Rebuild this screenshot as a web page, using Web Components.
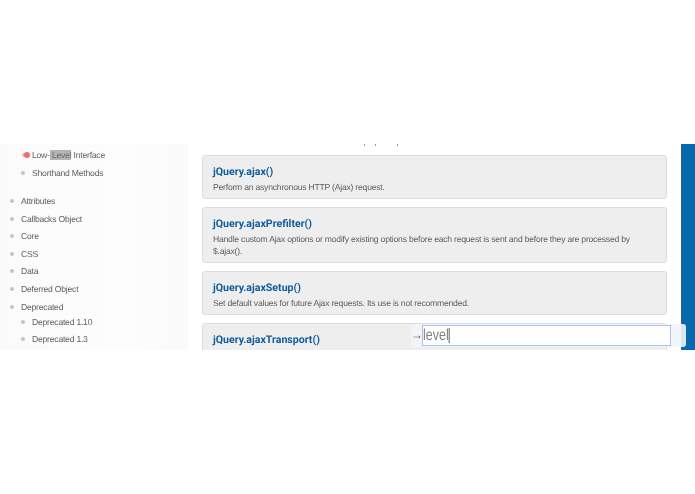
<!DOCTYPE html>
<html>
<head>
<meta charset="utf-8">
<title>jQuery API</title>
<style>
  html, body { margin: 0; background: #fff; }
  body { font-family: "Liberation Sans", Arial, sans-serif; text-rendering: geometricPrecision; }
</style>
</head>
<body>
<api-page>
  <side-nav slot="side">
    <nav-item level="2" active><span>Low-<mark-hit>Level</mark-hit> Interface</span></nav-item>
    <nav-item level="2" last>Shorthand Methods</nav-item>
    <nav-item>Attributes</nav-item>
    <nav-item>Callbacks Object</nav-item>
    <nav-item>Core</nav-item>
    <nav-item>CSS</nav-item>
    <nav-item>Data</nav-item>
    <nav-item>Deferred Object</nav-item>
    <nav-item tight>Deprecated</nav-item>
    <nav-item level="2">Deprecated 1.10</nav-item>
    <nav-item level="2">Deprecated 1.3</nav-item>
  </side-nav>
  <api-card title="jQuery.ajax()">Perform an asynchronous HTTP (Ajax) request.</api-card>
  <api-card title="jQuery.ajaxPrefilter()">Handle custom Ajax options or modify existing options before each request is sent and before they are processed by $.ajax().</api-card>
  <api-card title="jQuery.ajaxSetup()">Set default values for future Ajax requests. Its use is not recommended.</api-card>
  <api-card title="jQuery.ajaxTransport()">Bind a function to handle custom transport.</api-card>
  <find-bar slot="over" value="level"></find-bar>
</api-page>
<script>
class ApiPage extends HTMLElement {
  constructor() {
    super();
    this.attachShadow({ mode: "open" });
    this.shadowRoot.innerHTML = `
      <style>
        :host { display: block; width: 695px; height: 494px; padding-top: 144px; box-sizing: border-box; }
        .view { position: relative; display: flex; height: 206px; overflow: hidden; background: #fff; filter: blur(.3px); }
        .side { width: 188px; flex: none; background: linear-gradient(90deg, #fbfbfb, #fdfdfd 70%, #fafafa); }
        .main { width: 465px; flex: none; margin-left: 14px; padding-top: 11px; display: flex; flex-direction: column; gap: 8px; }
        .bar { width: 14px; flex: none; margin-left: 14px; background: #0769ad; border-left: 1px solid #2a6190; box-sizing: border-box; }
        .speck { position: absolute; top: 0; width: 1px; height: 2px; background: #999; }
        ::slotted([slot="over"]) { position: absolute; left: 411px; top: 180px; }
      </style>
      <div class="view">
        <div class="side"><slot name="side"></slot></div>
        <div class="main"><slot></slot></div>
        <div class="bar"></div>
        <span class="speck" style="left:364px"></span>
        <span class="speck" style="left:375px"></span>
        <span class="speck" style="left:397px"></span>
        <slot name="over"></slot>
      </div>`;
  }
}

class SideNav extends HTMLElement {
  constructor() {
    super();
    this.attachShadow({ mode: "open" });
    this.shadowRoot.innerHTML = `
      <style>
        :host { display: block; padding-top: 2.2px; }
      </style>
      <slot></slot>`;
  }
}

class NavItem extends HTMLElement {
  constructor() {
    super();
    this.attachShadow({ mode: "open" });
    this.shadowRoot.innerHTML = `
      <style>
        :host { display: flex; align-items: center; height: 17.6px; font: 8.6px "Liberation Sans", Arial, sans-serif; letter-spacing: -.22px; color: #606060; padding-left: 10px; gap: 7px; }
        :host([level="2"]) { padding-left: 21px; }
        :host([last]) { margin-bottom: 10.8px; }
        :host([tight]) { margin-bottom: -2.6px; }
        .dot { width: 4px; height: 4px; border-radius: 50%; background: #c4c4c4; flex: none; }
        :host([active]) .dot { width: 6px; height: 6px; background: #f26a72; box-shadow: -3px 0 0 -1px #eeb0b4; margin-left: 3px; margin-right: -5px; }
      </style>
      <span class="dot"></span><slot></slot>`;
  }
}

class MarkHit extends HTMLElement {
  constructor() {
    super();
    this.attachShadow({ mode: "open" });
    this.shadowRoot.innerHTML = `
      <style>:host { display: inline; background: #b4b4b4; color: #6a6a6a; }</style>
      <slot></slot>`;
  }
}

class ApiCard extends HTMLElement {
  constructor() {
    super();
    this.attachShadow({ mode: "open" });
    this.shadowRoot.innerHTML = `
      <style>
        :host { display: block; flex: none; box-sizing: border-box; background: #eee; border: 1px solid #ddd; border-radius: 3px; padding: 8px 10px 5px; }
        h2 { margin: 0 0 2px; font: bold 10.6px/15px Roboto, sans-serif; color: #0f5c9c; }
        p { margin: 0; font: 8.6px/12px "Liberation Sans", Arial, sans-serif; letter-spacing: -.22px; color: #606060; }
      </style>
      <h2></h2>
      <p><slot></slot></p>`;
    this.shadowRoot.querySelector("h2").textContent = this.getAttribute("title");
  }
}

class FindBar extends HTMLElement {
  constructor() {
    super();
    this.attachShadow({ mode: "open" });
    this.shadowRoot.innerHTML = `
      <style>
        :host { display: flex; align-items: center; width: 275px; height: 23px; box-sizing: border-box; background: rgba(240,245,249,.9); border-radius: 3px; }
        .arrow { width: 11px; text-align: center; font: 12px/15px "Liberation Sans", Arial, sans-serif; color: #666; flex: none; }
        .box { width: 249px; height: 21px; box-sizing: border-box; background: #fff; border: 1px solid #a9c3e8; display: flex; align-items: center; }
        .txt { display: flex; align-items: center; transform: scaleX(.78); transform-origin: left center; font: 16px "Liberation Sans", Arial, sans-serif; color: #808080; }
        .caret { width: 1px; height: 15px; background: #333; }
      </style>
      <span class="arrow">→</span>
      <div class="box"><div class="txt"><span class="val"></span><span class="caret"></span></div></div>`;
    this.shadowRoot.querySelector(".val").textContent = this.getAttribute("value");
  }
}

customElements.define("mark-hit", MarkHit);
customElements.define("nav-item", NavItem);
customElements.define("side-nav", SideNav);
customElements.define("api-card", ApiCard);
customElements.define("find-bar", FindBar);
customElements.define("api-page", ApiPage);
</script>
</body>
</html>
